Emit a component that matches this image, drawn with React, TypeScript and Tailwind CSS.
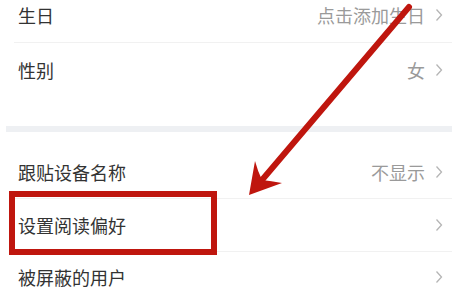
import React from "react";

interface RowProps {
  label: string;
  value?: string;
  className?: string;
}

const Chevron: React.FC = () => (
  <svg width="8" height="14" viewBox="0 0 8 14" className="shrink-0">
    <path d="M1.5 1.5 L6.5 7 L1.5 12.5" fill="none" stroke="#b5b5b5" strokeWidth="1.3" />
  </svg>
);

// one settings row: label on the left, optional value + chevron on the right
const Row: React.FC<RowProps> = ({ label, value, className }) => (
  <div className={`flex items-center justify-between pl-[18px] pr-[9px] ${className ?? ""}`}>
    <span className="text-[18px] leading-none text-[#333333]">{label}</span>
    <div className="flex items-center gap-[10px]">
      {value && <span className="text-[18px] leading-none text-[#9a9a9a]">{value}</span>}
      <Chevron />
    </div>
  </div>
);

const Divider: React.FC = () => <div className="h-px ml-[14px] bg-[#f1f1f1]" />;

const App: React.FC = () => {
  return (
    <div
      className="relative w-[452px] h-[296px] overflow-hidden bg-white"
      style={{ fontFamily: '"Noto Sans CJK SC", "Noto Sans", sans-serif' }}
    >
      {/* first group */}
      <Row label="生日" value="点击添加生日" className="h-[54px] -mt-[12px]" />
      <Divider />
      <Row label="性别" value="女" className="h-[54px]" />
      <div className="h-[29px]" />

      {/* section gap */}
      <div className="h-[6px] ml-[6px] bg-[#eef0f3]" />
      <div className="h-[13px]" />

      {/* second group */}
      <Row label="跟贴设备名称" value="不显示" className="h-[53px]" />
      <Divider />
      <Row label="设置阅读偏好" className="h-[52px]" />
      <Divider />
      <Row label="被屏蔽的用户" className="h-[50px]" />

      {/* red highlight box */}
      <div className="absolute left-[9px] top-[191px] w-[208px] h-[64px] border-[6px] border-[#bf160e]" />

      {/* red annotation arrow */}
      <svg className="absolute inset-0 pointer-events-none" width="452" height="296" viewBox="0 0 452 296">
        <line x1="409" y1="7" x2="262" y2="180" stroke="#bf160e" strokeWidth="6" strokeLinecap="round" />
        <path
          d="M249 195 L255 161 Q258 172 262 180 Q271 181 282 183 Z"
          fill="#bf160e"
        />
      </svg>
    </div>
  );
};

export default App;
